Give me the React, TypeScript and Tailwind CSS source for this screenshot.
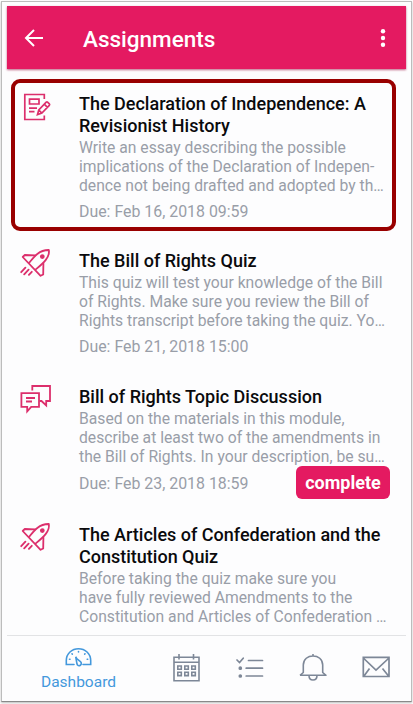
interface Assignment {
    icon: 'essay' | 'quiz' | 'discussion';
    title: string[];
    text: string[];
    due?: string;
    complete?: boolean;
    highlighted?: boolean;
}

const assignments: Assignment[] = [
    {
        icon: 'essay',
        title: ['The Declaration of Independence: A', 'Revisionist History'],
        text: ['Write an essay describing the possible', 'implications of the Declaration of Indepen-', 'dence not being drafted and adopted by th…'],
        due: 'Due: Feb 16, 2018 09:59',
        highlighted: true,
    },
    {
        icon: 'quiz',
        title: ['The Bill of Rights Quiz'],
        text: ['This quiz will test your knowledge of the Bill', 'of Rights. Make sure you review the Bill of', 'Rights transcript before taking the quiz. Yo…'],
        due: 'Due: Feb 21, 2018 15:00',
    },
    {
        icon: 'discussion',
        title: ['Bill of Rights Topic Discussion'],
        text: ['Based on the materials in this module,', 'describe at least two of the amendments in', 'the Bill of Rights. In your description, be su…'],
        due: 'Due: Feb 23, 2018 18:59',
        complete: true,
    },
    {
        icon: 'quiz',
        title: ['The Articles of Confederation and the', 'Constitution Quiz'],
        text: ['Before taking the quiz make sure you', 'have fully reviewed Amendments to the', 'Constitution and Articles of Confederation …'],
    },
];

function AssignmentIcon({ type }: { type: Assignment['icon'] }) {
    if (type === 'essay') {
        return (
            <svg className="mt-[1px]" width="32" height="30" viewBox="0 0 32 30" fill="none" stroke="#dc2f6c" strokeWidth="1.7">
                <path d="M24.3 7V2.5H4.8V27.5H24.3V23.5" />
                <path d="M9.5 7.2H19V12H9.5ZM9 16.2H17M9 19.7H14.5" />
                <path d="M17.5 22.6L18.8 18L26.2 10.2Q27 9.6 27.8 10.3L29.3 11.8Q30 12.6 29.3 13.4L21.9 21.1ZM18.8 18L21.9 21.1M24.3 12.2L27.4 15.3" />
            </svg>
        );
    }
    if (type === 'quiz') {
        return (
            <svg width="32" height="30" viewBox="0 0 32 30" fill="none" stroke="#dc2f6c" strokeWidth="1.8" strokeLinejoin="round" strokeLinecap="round">
                <path d="M9.2 14.8C14 8.5 19.5 1.8 28.8 2C30.3 9.5 22.6 15.7 15.8 21.4" />
                <path d="M15.2 7.4L4.8 7L2.7 9L20.6 27.8L23.2 26.5L23.4 15.5" />
                <path d="M5.4 19.6L1.2 24.2M8.6 21.6L4.2 26.4M11.8 23.8L8.9 26.9" />
                <circle cx="22.3" cy="8.6" r="1.5" fill="#dc2f6c" />
            </svg>
        );
    }
    return (
        <svg width="32" height="30" viewBox="0 0 32 30" fill="none" stroke="#dc2f6c" strokeWidth="1.8">
            <path d="M1.4 9.2H19V22.8H11.2L7.2 27.3V22.8H1.4Z" />
            <path d="M12.3 6.5V2H30V17H26.2V21.4L21.5 17H19.5M6 14H15M6 17.5H12" />
        </svg>
    );
}

function AssignmentRow({ item }: { item: Assignment }) {
    return (
        <article className="flex">
            <div className="-mt-[2px] w-[59px] shrink-0">
                <AssignmentIcon type={item.icon} />
            </div>
            <div className="min-w-0 flex-1 whitespace-nowrap">
                <h2 className="text-[18px] font-medium leading-[22px] text-[#0a0a0c]">
                    {item.title.map((line) => <span key={line} className="block">{line}</span>)}
                </h2>
                <p className="mt-[2px] text-[15.7px] leading-[18.75px] text-[#999ea8]">
                    {item.text.map((line) => <span key={line} className="block">{line}</span>)}
                </p>
                {item.due && (
                    <div className="flex h-[33px] items-center justify-between text-[15.9px] text-[#999ea8]">
                        <span className={item.complete ? 'pt-[3px]' : ''}>{item.due}</span>
                        {item.complete && (
                            <span className="flex h-[33px] w-[94px] items-center justify-center rounded-[6px] bg-[#e41a61] text-[18px] font-bold text-white">complete</span>
                        )}
                    </div>
                )}
            </div>
        </article>
    );
}

function BottomNav() {
    return (
        <nav className="flex h-[66px] shrink-0 border-t border-[#e2e3e5] text-[#7d8797]">
            <div className="flex w-[143px] flex-col items-center pt-[11px] text-[#4398dc]">
                <svg width="28" height="20" viewBox="0 0 28 20" fill="none" stroke="currentColor" strokeWidth="1.6" strokeLinecap="round">
                    <path d="M9 17.5H1.3V13.5C1.3 6.5 7 1.7 13.5 1.7S25.7 6.5 25.7 13.5V17.5H18" />
                    <path d="M10.7 9.7C11.3 12 13.7 13.2 15.8 15C17.3 17.3 14.5 20 12.5 18C11.3 16 11.5 12.5 10.7 9.7Z" />
                    <path d="M13.5 4.5V5M7 6.8L7.3 7.1M20 6.8L19.7 7.1M4.5 12.3H5M22.7 12.3H22.2" />
                </svg>
                <span className="mt-[5px] text-[15.5px] leading-[20px]">Dashboard</span>
            </div>
            <div className="ml-[22px] mt-[17px]">
                <svg width="30" height="30" viewBox="0 0 30 30" fill="none" stroke="currentColor" strokeWidth="1.6">
                    <path d="M2 4.2H27V27.7H2ZM2 9.3H27M7 1V6.5M21.5 1V6.5" />
                    <path d="M5.8 13H9.3V16.3H5.8ZM12.8 13H16.3V16.3H12.8ZM19.8 13H23.3V16.3H19.8ZM5.8 19.3H9.3V22.6H5.8ZM12.8 19.3H16.3V22.6H12.8ZM19.8 19.3H23.3V22.6H19.8Z" />
                </svg>
            </div>
            <div className="ml-[33px] mt-[20px]">
                <svg width="30" height="24" viewBox="0 0 30 24" fill="none" stroke="currentColor" strokeWidth="1.7" strokeLinecap="round">
                    <path d="M2 4L4.5 6.5L8.2 2.2M13.5 4.5H27.5M11.2 12.2H27.5M11.2 20H27.5" />
                    <circle cx="5.3" cy="12.2" r="1" fill="currentColor" />
                    <circle cx="5.3" cy="20" r="1" fill="currentColor" />
                </svg>
            </div>
            <div className="ml-[33px] mt-[17px]">
                <svg width="30" height="30" viewBox="0 0 30 30" fill="none" stroke="currentColor" strokeWidth="1.6" strokeLinejoin="round">
                    <path d="M15 1V3M2 22.3H28L24.7 19.5V12C24.7 6 20 3 15 3S5.3 6 5.3 12V19.5L2 22.3M11 22.5C11 28.5 19 28.5 19 22.5" />
                </svg>
            </div>
            <div className="ml-[33px] mt-[19px]">
                <svg width="30" height="24" viewBox="0 0 30 24" fill="none" stroke="currentColor" strokeWidth="1.7">
                    <path d="M2.3 2.3H28V21.5H2.3ZM2.3 3L15 15L28 3M3 21L8.5 13.5M27.5 21L21.5 13.5" />
                </svg>
            </div>
        </nav>
    );
}

export default function App() {
    return (
        <main className="h-[704px] w-[413px] bg-white pl-[1px] pr-[1px] pt-[1px] font-[Roboto,sans-serif]">
            <div className="flex h-[701px] flex-col border border-[#bcbcbc] border-b-[#898989] bg-[#fdfdfe] px-[5px] pt-[4px] shadow-[0_1px_2px_#bbb]">
                <header className="z-10 flex h-[63px] w-[399px] shrink-0 items-center bg-[#e41a61] pl-[17px] pr-[20px] text-white shadow-[0_1px_2px_#bd6384]">
                    <svg width="20" height="20" viewBox="0 0 20 20" fill="none" stroke="currentColor" strokeWidth="2">
                        <path d="M10 2L2 10L10 18M2 10H19" />
                    </svg>
                    <h1 className="ml-[39px] flex-1 pt-[4px] text-[22.5px] font-medium">Assignments</h1>
                    <svg width="6" height="20" viewBox="0 0 6 20" fill="currentColor">
                        <circle cx="3" cy="3.3" r="2.2" />
                        <circle cx="3" cy="10" r="2.2" />
                        <circle cx="3" cy="16.7" r="2.2" />
                    </svg>
                </header>
                <div className="flex-1 overflow-hidden pl-[4px] pt-[10px]">
                    {assignments.map((item, index) => (
                        <div
                            key={index}
                            className={item.highlighted
                                ? 'h-[152px] w-[385px] rounded-[9px] border-4 border-[#990000] pl-[5px] pt-[10px]'
                                : index === 1 ? 'h-[136px] w-[379px] pl-[9px] pt-[19px]'
                                : index === 2 ? 'h-[137px] w-[379px] pl-[9px] pt-[19px]'
                                : 'w-[379px] pl-[9px] pt-[20px]'}
                        >
                            <AssignmentRow item={item} />
                        </div>
                    ))}
                </div>
                <BottomNav />
            </div>
        </main>
    );
}
